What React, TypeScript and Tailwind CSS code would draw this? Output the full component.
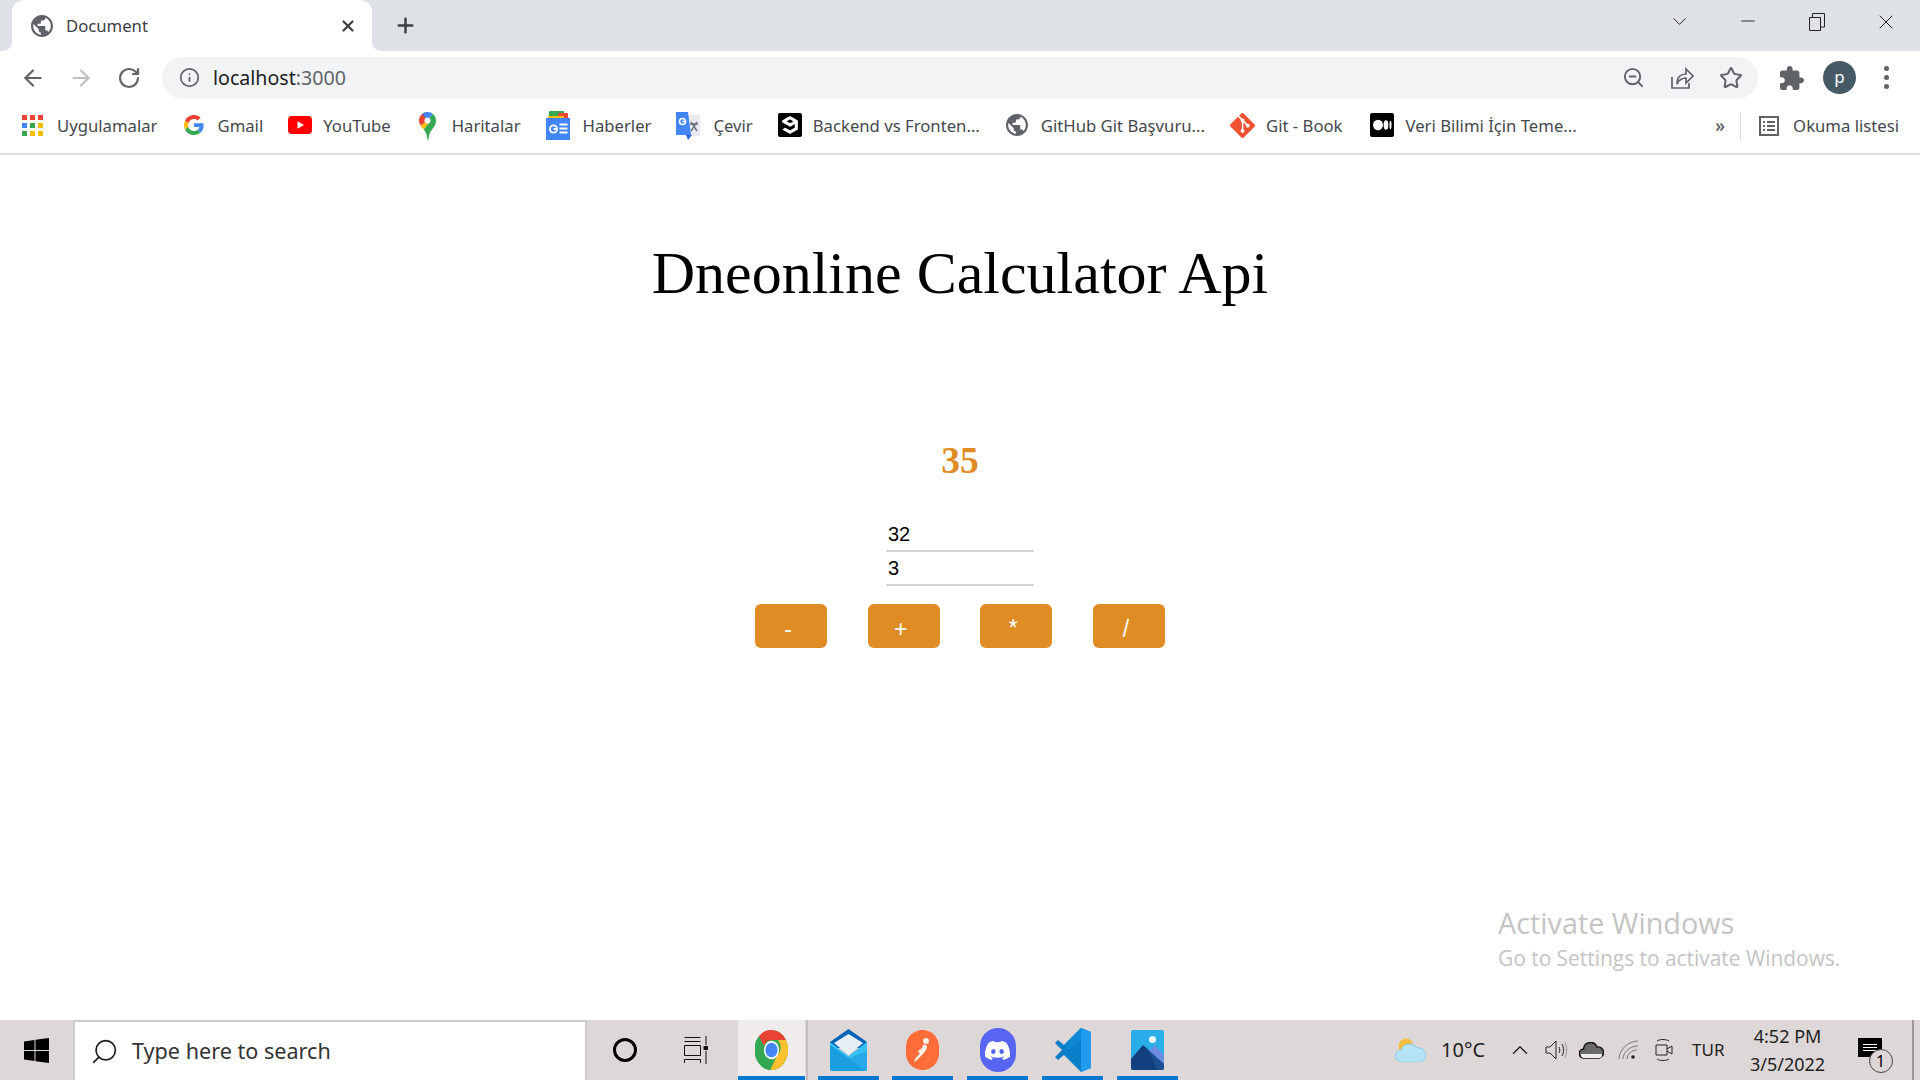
import { ArrowLeft, ArrowRight, ChevronDown, ChevronUp, Info, Minus, Plus, RotateCw, Search, Star, X, ZoomOut } from "lucide-react";
import { Si9Gag, SiDiscord, SiGit } from "react-icons/si";

const GLOBE =
  "M12 2C6.48 2 2 6.48 2 12s4.48 10 10 10 10-4.48 10-10S17.52 2 12 2zm-1 17.93c-3.95-.49-7-3.85-7-7.93 0-.62.08-1.21.21-1.79L9 15v1c0 1.1.9 2 2 2v1.93zm6.9-2.54c-.26-.81-1-1.39-1.9-1.39h-1v-3c0-.55-.45-1-1-1H8v-2h2c.55 0 1-.45 1-1V7h2c1.1 0 2-.9 2-2v-.41c2.93 1.19 5 4.06 5 7.41 0 2.08-.8 3.97-2.1 5.39z";

function Globe({ size }: { size: number }) {
  return (
    <svg width={size} height={size} viewBox="2 2 20 20" fill="#5f6368">
      <path d={GLOBE} />
    </svg>
  );
}

function AppsGrid() {
  const colors = ["#ea4335", "#ea4335", "#ea4335", "#4285f4", "#34a853", "#fbbc04", "#34a853", "#fbbc04", "#fbbc04"];
  return (
    <div className="grid grid-cols-3 gap-[3px] w-[21px]">
      {colors.map((c, i) => (
        <span key={i} className="w-[5px] h-[5px]" style={{ backgroundColor: c }} />
      ))}
    </div>
  );
}

function GoogleG() {
  return (
    <svg width="20" height="20" viewBox="0 0 48 48">
      <path fill="#4285f4" d="M46.98 24.55c0-1.57-.15-3.09-.38-4.55H24v9.02h12.94c-.58 2.96-2.26 5.48-4.78 7.18l7.73 6c4.51-4.18 7.09-10.36 7.09-17.65z" />
      <path fill="#fbbc05" d="M10.53 28.59c-.48-1.45-.76-2.99-.76-4.59s.27-3.14.76-4.59l-7.98-6.19C.92 16.46 0 20.12 0 24c0 3.88.92 7.54 2.56 10.78l7.97-6.19z" />
      <path fill="#ea4335" d="M24 9.5c3.54 0 6.71 1.22 9.21 3.6l6.85-6.85C35.9 2.38 30.47 0 24 0 14.62 0 6.51 5.38 2.56 13.22l7.98 6.19C12.43 13.72 17.74 9.5 24 9.5z" />
      <path fill="#34a853" d="M24 48c6.48 0 11.93-2.13 15.89-5.81l-7.73-6c-2.15 1.45-4.92 2.3-8.16 2.3-6.26 0-11.57-4.22-13.47-9.91l-7.98 6.19C6.51 42.62 14.62 48 24 48z" />
    </svg>
  );
}

function YouTubeIcon() {
  return (
    <svg width="24" height="18" viewBox="0 0 24 18">
      <rect width="24" height="18" rx="4" fill="#ff0000" />
      <path d="M9.5 5.2 16 9l-6.500 3.800z" fill="#fff" />
    </svg>
  );
}

function MapsIcon() {
  return (
    <svg width="17" height="28" viewBox="0 0 17 28">
      <path d="M8.5 0C3.8 0 0 3.8 0 8.5c0 2 .7 3.8 1.8 5.2L8.5 8.5z" fill="#ea4335" />
      <path d="M8.5 0c-2 0-3.9.7-5.3 1.9l5.3 6.6 5.3-6.6C12.4.7 10.5 0 8.5 0z" fill="#4285f4" />
      <path d="M8.5 8.5 1.8 13.7c.9 1.3 2 2.5 3 3.7l6.5-8.2z" fill="#fbbc04" />
      <path d="M13.8 1.9 8.5 8.5l2.8.7-6.5 8.2c1.6 2.1 3 4.4 3.7 10.6h.8c.9-7.5 3-9.4 5.3-12.5 1.5-2 2.4-4 2.4-7 0-2.6-1.1-4.9-2.9-6.6z" fill="#34a853" />
      <circle cx="8.5" cy="8.5" r="3" fill="#fff" />
    </svg>
  );
}

function NewsIcon() {
  return (
    <svg width="24" height="29" viewBox="0 0 24 29">
      <rect x="3" y="0" width="15" height="8" rx="1" fill="#34a853" />
      <rect x="12" y="2" width="10" height="7" rx="1" fill="#ea4335" />
      <path d="M2 5h16v4H2z" fill="#fbbc04" />
      <rect x="0" y="7" width="24" height="22" fill="#4285f4" />
      <circle cx="7.5" cy="18" r="3.6" fill="none" stroke="#fff" strokeWidth="1.8" />
      <path d="M7.500 18h3.600M13.500 13.500h8M13.500 17.500h8M13.500 21.500h8" stroke="#fff" strokeWidth="1.8" />
    </svg>
  );
}

function TranslateIcon() {
  return (
    <svg width="24" height="28" viewBox="0 0 24 28">
      <rect x="9" y="3" width="15" height="21" fill="#e8eaed" />
      <path d="m15 10 6 9M21 10l-6 9M14 12h8" stroke="#6b7280" strokeWidth="1.4" fill="none" />
      <path d="M0 0h12l3 23H0z" fill="#4285f4" />
      <path d="M10 23h6l-4 5z" fill="#3367d6" />
      <circle cx="6.5" cy="9.5" r="3" fill="none" stroke="#fff" strokeWidth="1.6" />
      <path d="M6.500 9.500h3" stroke="#fff" strokeWidth="1.6" />
    </svg>
  );
}

function MediumIcon() {
  return (
    <svg width="24" height="24" viewBox="0 0 24 24">
      <rect width="24" height="24" rx="2" fill="#000" />
      <ellipse cx="8" cy="12" rx="5" ry="5.200" fill="#fff" />
      <ellipse cx="16" cy="12" rx="2.400" ry="4.800" fill="#fff" />
      <ellipse cx="20.500" cy="12" rx="1" ry="4.200" fill="#fff" />
    </svg>
  );
}

function Bookmark({ icon, label, className }: { icon: React.ReactNode; label: string; className: string }) {
  return (
    <div className={`flex items-center shrink-0 ${className}`}>
      <div className="flex items-center justify-center">{icon}</div>
      <span className="text-[16.7px] text-[#45484d] whitespace-nowrap">{label}</span>
    </div>
  );
}

function CalcButton({ label, pb }: { label: string; pb: string }) {
  return (
    <button className={`w-[72px] h-[44px] rounded-[6px] bg-[#de8c23] text-white text-[23px] pr-[6px] ${pb}`}>
      {label}
    </button>
  );
}

function ChromeLogo() {
  return (
    <svg width="33" height="40" viewBox="0 0 48 48" preserveAspectRatio="none">
      <circle cx="24" cy="24" r="24" fill="#34a853" />
      <path d="M24 0a24 24 0 0 1 20.800 12H24a12 12 0 0 0-11 7.200L5.600 7.600A24 24 0 0 1 24 0z" fill="#ea4335" />
      <path d="M44.800 12A24 24 0 0 1 22 48l10-17a12 12 0 0 0 1-19z" fill="#fbc02d" />
      <path d="M5.600 7.600 15 24a10 10 0 0 0 12 7L22 48A24 24 0 0 1 5.600 7.600z" fill="#34a853" />
      <circle cx="24" cy="24" r="11" fill="#fff" />
      <circle cx="24" cy="24" r="8.800" fill="#4285f4" />
    </svg>
  );
}

function MailLogo() {
  return (
    <svg width="37" height="42" viewBox="0 0 37 42">
      <path d="M0 13 18.500 0 37 13v6H0z" fill="#0364b8" />
      <path d="M4 14 18.500 5 33 14 18.500 26z" fill="#e8eef5" />
      <path d="M0 13 18.500 27 37 13v27a2 2 0 0 1-2 2H2a2 2 0 0 1-2-2z" fill="#35c1f1" />
      <path d="M0 16 37 42H2a2 2 0 0 1-2-2z" fill="#1a9ee0" />
      <path d="M37 40V22L20 29l15 13a2 2 0 0 0 2-2z" fill="#28a8ea" />
    </svg>
  );
}

function VsCodeLogo() {
  return (
    <svg width="36" height="44" viewBox="0 0 36 44">
      <path d="M26 0 36 4v36l-10 4L9 27l-6 5-3-3 7-7-7-7 3-3 6 5z" fill="#0a7fc9" />
      <path d="M26 0 36 4v36l-10 4z" fill="#1f9cf0" />
      <path d="M26 0v12L14 22 9 17z" fill="#0f87d4" />
    </svg>
  );
}

function PhotosLogo() {
  return (
    <svg width="33" height="40" viewBox="0 0 33 40">
      <rect width="33" height="40" rx="2" fill="#29aeea" />
      <circle cx="21.500" cy="9.500" r="3.600" fill="#e8f6fd" />
      <path d="M0 38V29l12-14 21 19v4a2 2 0 0 1-2 2H2a2 2 0 0 1-2-2z" fill="#123f7d" />
      <path d="m18 21 6-6 9 10v15h-2z" fill="#6d8ee0" />
      <path d="M12 15 33 34v4a2 2 0 0 1-2 2h-5L18 21z" fill="#1d4f93" />
    </svg>
  );
}

function TaskApp({ children, className = "" }: { children: React.ReactNode; className?: string }) {
  return (
    <div className={`relative h-full flex items-center justify-center ${className}`}>
      {children}
      <span className="absolute left-0 right-0 bottom-0 h-[4px] bg-[#0078d4]" />
    </div>
  );
}

export default function App() {
  return (
    <div className="w-[1920px] h-[1080px] flex flex-col overflow-hidden bg-white font-['Noto_Sans',sans-serif]">
      {/* Tab strip */}
      <div className="h-[51px] shrink-0 bg-[#dee1e6] flex items-end">
        <div className="relative ml-3 w-[360px] h-[51px] bg-white rounded-t-[12px] flex items-center pl-[19px] pr-[15px]">
          {/* concave corners where the tab meets the toolbar */}
          <span className="absolute bottom-0 -left-[10px] w-[10px] h-[10px] bg-[radial-gradient(circle_at_0_0,transparent_10px,white_10.5px)]" />
          <span className="absolute bottom-0 -right-[10px] w-[10px] h-[10px] bg-[radial-gradient(circle_at_100%_0,transparent_10px,white_10.5px)]" />
          <Globe size={22} />
          <span className="ml-[13px] text-[16.7px] text-[#3c4043] flex-1">Document</span>
          <X size={18} strokeWidth={3} className="text-[#3c4043]" />
        </div>
        <div className="h-[51px] flex items-center ml-[22px]">
          <Plus size={23} strokeWidth={2.6} className="text-[#3c4043]" />
        </div>
        <div className="flex-1 h-full flex items-start justify-end pt-[10px] text-[#202124]">
          <ChevronDown size={23} strokeWidth={1} className="mr-[46px]" />
          <Minus size={22} strokeWidth={1} className="mr-[50px]" />
          <svg width="16" height="18" viewBox="0 0 16 18" fill="none" stroke="#202124" className="mt-[3px] mr-[49px]">
            <path d="M.5 4.500h11v13H.5zM3.500 4V.5h12V14H12" />
          </svg>
          <X size={24} strokeWidth={1} className="mr-[22px]" />
        </div>
      </div>

      {/* Toolbar */}
      <div className="h-[53px] shrink-0 flex items-center">
        <ArrowLeft size={26} strokeWidth={2} className="ml-[20px] text-[#5f6368]" />
        <ArrowRight size={26} strokeWidth={2} className="ml-[22px] text-[#bdc1c6]" />
        <RotateCw size={24} strokeWidth={2.2} className="ml-[23px] text-[#5f6368]" />
        <div className="ml-[21px] w-[1596px] h-[42px] rounded-full bg-[#f1f3f4] flex items-center pl-[17px] pr-[15px]">
          <Info size={21} strokeWidth={2} className="text-[#5f6368]" />
          <span className="ml-[13px] text-[19.6px] text-[#202124] flex-1 pt-[1px]">
            localhost<span className="text-[#5f6368]">:3000</span>
          </span>
          <ZoomOut size={23} strokeWidth={2} className="text-[#5f6368] mr-[25px]" />
          <svg width="24" height="24" viewBox="0 0 24 24" fill="none" stroke="#5f6368" strokeWidth="1.7" className="mr-[25px]">
            <path d="M2 11v11h17v-5" />
            <path d="M7 18c0-7 4-10 9-10V3l7 7-7 7v-5c-4 0-7 2-9 6z" />
          </svg>
          <Star size={24} strokeWidth={2} className="text-[#5f6368]" />
        </div>
        <svg width="24" height="24" viewBox="2 1 21 21" fill="#5f6368" className="ml-[22px]">
          <path d="M20.5 11H19V7c0-1.1-.9-2-2-2h-4V3.5C13 2.12 11.88 1 10.5 1S8 2.12 8 3.5V5H4c-1.1 0-1.99.9-1.99 2v3.8H3.5c1.49 0 2.7 1.21 2.7 2.7s-1.21 2.7-2.7 2.7H2V20c0 1.1.9 2 2 2h3.8v-1.5c0-1.49 1.21-2.7 2.7-2.7 1.49 0 2.7 1.21 2.7 2.7V22H17c1.1 0 2-.9 2-2v-4h1.5c1.38 0 2.5-1.12 2.5-2.5S21.88 11 20.5 11z" />
        </svg>
        <div className="ml-[19px] w-[33px] h-[33px] rounded-full bg-[#455a64] flex items-center justify-center text-white text-[17px] leading-none pb-[2px]">
          p
        </div>
        <div className="ml-[28px] flex flex-col gap-[4px]">
          <span className="w-[5px] h-[5px] rounded-full bg-[#5f6368]" />
          <span className="w-[5px] h-[5px] rounded-full bg-[#5f6368]" />
          <span className="w-[5px] h-[5px] rounded-full bg-[#5f6368]" />
        </div>
      </div>

      {/* Bookmarks */}
      <div className="h-[51px] shrink-0 border-b-2 border-[#dcdddf] flex items-center pb-[6px]">
        <Bookmark className="ml-[22px] gap-[14px]" icon={<AppsGrid />} label="Uygulamalar" />
        <Bookmark className="ml-[27px] gap-[13px]" icon={<GoogleG />} label="Gmail" />
        <Bookmark className="ml-[25px] gap-[11px]" icon={<YouTubeIcon />} label="YouTube" />
        <Bookmark className="ml-[28px] gap-[16px]" icon={<MapsIcon />} label="Haritalar" />
        <Bookmark className="ml-[25px] gap-[13px]" icon={<NewsIcon />} label="Haberler" />
        <Bookmark className="ml-[25px] gap-[13px]" icon={<TranslateIcon />} label="Çevir" />
        <Bookmark className="ml-[25px] gap-[11px]" icon={<Si9Gag size={24} className="bg-black text-white rounded-[2px] p-[3px]" />} label="Backend vs Fronten..." />
        <Bookmark className="ml-[26px] gap-[13px]" icon={<Globe size={22} />} label="GitHub Git Başvuru..." />
        <Bookmark className="ml-[25px] gap-[11px]" icon={<SiGit size={25} color="#f05133" />} label="Git - Book" />
        <Bookmark className="ml-[27px] gap-[12px]" icon={<MediumIcon />} label="Veri Bilimi İçin Teme..." />
        <span className="ml-auto text-[17px] text-[#5f6368] font-semibold">»</span>
        <span className="ml-[15px] w-px h-[28px] bg-[#d5d6d8]" />
        <svg width="22" height="22" viewBox="0 0 22 22" fill="none" stroke="#5f6368" strokeWidth="2" className="ml-[17px]">
          <path d="M2 2h18v18H2zM9 7h8M9 11h8M9 15h8M5 7h2M5 11h2M5 15h2" />
        </svg>
        <span className="ml-[13px] mr-[21px] text-[16.7px] text-[#45484d] whitespace-nowrap">Okuma listesi</span>
      </div>

      {/* Page */}
      <main className="relative flex-1 flex flex-col items-center font-['Liberation_Serif',serif]">
        <h1 className="mt-[88px] text-[60px] leading-none text-black">Dneonline Calculator Api</h1>
        <div className="mt-[135px] text-[37.5px] leading-[45px] font-bold text-[#de8c23]">35</div>
        <div className="mt-[35px] w-[148px] flex flex-col font-['Liberation_Sans',sans-serif] text-[20px] text-black">
          <div className="h-[34px] border-b-2 border-[#d3d3d3] pl-[2px] leading-[32px]">32</div>
          <div className="h-[34px] border-b-2 border-[#d3d3d3] pl-[2px] leading-[32px]">3</div>
        </div>
        <div className="mt-[18px] flex gap-[40.6px] font-['Liberation_Sans',sans-serif]">
          <CalcButton label="-" pb="pt-[6px]" />
          <CalcButton label="+" pb="pt-[6px]" />
          <CalcButton label="*" pb="pt-[4px]" />
          <CalcButton label="/" pb="pt-[6px]" />
        </div>

        {/* Windows watermark */}
        <div className="absolute left-[1498px] top-[748px] text-[#c4c4c4] font-['Open_Sans',sans-serif]">
          <div className="text-[28.8px] leading-[40px]">Activate Windows</div>
          <div className="text-[20.9px] leading-[30px]">Go to Settings to activate Windows.</div>
        </div>
      </main>

      {/* Taskbar */}
      <div className="h-[60px] shrink-0 bg-[#ded7d8] flex items-center text-[#1f1f1f]">
        <svg width="25" height="25" viewBox="0 0 25 25" fill="#000" className="ml-[24px]">
          <path d="M0 3.500 10.500 2v10H0zM11.500 1.800 25 0v12H11.500zM0 13h10.500v10L0 21.500zM11.500 13H25v12l-13.500-1.800z" />
        </svg>
        <div className="ml-[24px] w-[514px] h-full border-2 border-[#cdcdcd] border-b-0 bg-white flex items-center pl-[15px]">
          <Search size={29} strokeWidth={1.4} className="text-[#1f1f1f] -scale-x-100" />
          <span className="ml-[13px] text-[21.6px] text-[#333]">Type here to search</span>
        </div>
        <span className="ml-[26px] w-[24px] h-[24px] rounded-full border-[3px] border-black" />
        <svg width="24" height="28" viewBox="0 0 24 28" fill="none" stroke="#111" className="ml-[47px]">
          <path d="M.5 1.500h16M.5 5.500h16M.5 9.500h16v10H.5zM.5 27v-3.500h16V27M22 0v9M22 15v13" />
          <rect x="19.500" y="10" width="5" height="4" fill="#111" stroke="none" />
        </svg>
        <TaskApp className="ml-[30px] w-[67px] bg-[#f0ecec]">
          <ChromeLogo />
        </TaskApp>
        <span className="ml-[1px] w-[2px] h-full bg-[#c2bcbd]" />
        <TaskApp className="ml-[10px] w-[61px]">
          <MailLogo />
        </TaskApp>
        <TaskApp className="ml-[13px] w-[61px]">
          <div className="w-[33px] h-[40px] rounded-full bg-[#ff6c37] flex items-center justify-center">
            <svg width="20" height="26" viewBox="0 0 20 26" fill="#fdeee6">
              <circle cx="13" cy="4" r="3" />
              <path d="M10 8c2-1 4 0 4 2s-2 5-5 8L3 24l-2 1 1-3 5-6c-1 0-2-1-2-2l4-3z" />
            </svg>
          </div>
        </TaskApp>
        <TaskApp className="ml-[14px] w-[61px]">
          <div className="w-[36px] h-[44px] rounded-full bg-[#5865f2] flex items-center justify-center">
            <SiDiscord size={25} color="#fff" />
          </div>
        </TaskApp>
        <TaskApp className="ml-[14px] w-[61px]">
          <VsCodeLogo />
        </TaskApp>
        <TaskApp className="ml-[14px] w-[61px]">
          <PhotosLogo />
        </TaskApp>
        <svg width="31" height="24" viewBox="0 0 31 24" className="ml-[217px]">
          <circle cx="11" cy="8" r="7.500" fill="#f5bd3f" />
          <path d="M7 24a6 6 0 0 1-1-12 9 9 0 0 1 16-2 7 7 0 0 1 3 14z" fill="#b4e2f7" stroke="#8fcdea" />
        </svg>
        <span className="ml-[15px] text-[20px]">10°C</span>
        <ChevronUp size={26} strokeWidth={1.2} className="ml-[22px]" />
        <svg width="22" height="22" viewBox="0 0 22 22" fill="none" stroke="#222" className="ml-[12px]">
          <path d="M1 8v6h4l6 6V2L5 8z" />
          <path d="M14 8c1 2 1 4 0 6M17 5c2 4 2 8 0 12" />
          <path d="M20 3c2 5 2 11 0 16" stroke="#999" />
        </svg>
        <svg width="25" height="17" viewBox="0 0 25 17" className="ml-[12px]">
          <path d="M5 16a4.500 4.500 0 0 1-.5-9A7 7 0 0 1 18 5a5.500 5.500 0 0 1 2 11z" fill="#6a6a6a" stroke="#111" strokeWidth="1.4" />
          <path d="M2 12h21v1a3 3 0 0 1-3 3H5a3 3 0 0 1-3-3z" fill="#eee" />
        </svg>
        <svg width="22" height="20" viewBox="0 0 22 20" fill="none" stroke="#777" className="ml-[14px]">
          <path d="M1 19C1 10 10 1 20 1M5 19c0-6 6-13 15-13M9 19c0-4 4-9 10-9" />
          <circle cx="15" cy="17" r="1.800" fill="#222" stroke="none" />
        </svg>
        <svg width="18" height="24" viewBox="0 0 18 24" fill="none" stroke="#222" className="ml-[15px]">
          <path d="M1 7h11v10H1zM12 11l5-3v8l-5-3M2 3c3-2 9-2 12 0M2 21c3 2 9 2 12 0" />
        </svg>
        <span className="ml-[19px] text-[17px]">TUR</span>
        <div className="ml-[26px] w-[74px] flex flex-col items-center text-[18px] leading-[28px]">
          <span className="whitespace-nowrap">4:52 PM</span>
          <span className="whitespace-nowrap">3/5/2022</span>
        </div>
        <div className="relative ml-[33px] w-[24px] h-[19px] bg-black flex flex-col gap-[2px] items-center justify-center -mt-[6px]">
          <span className="w-[14px] h-px bg-white" />
          <span className="w-[14px] h-px bg-white" />
          <span className="w-[14px] h-px bg-white" />
          <span className="absolute -right-[11px] top-[11px] w-[24px] h-[24px] rounded-full border border-[#444] bg-[#ddd6d7] flex items-center justify-center text-[16px] leading-none text-black">
            1
          </span>
        </div>
        <span className="ml-auto mr-[6px] w-[2px] h-full bg-[#9a9698]" />
      </div>
    </div>
  );
}
